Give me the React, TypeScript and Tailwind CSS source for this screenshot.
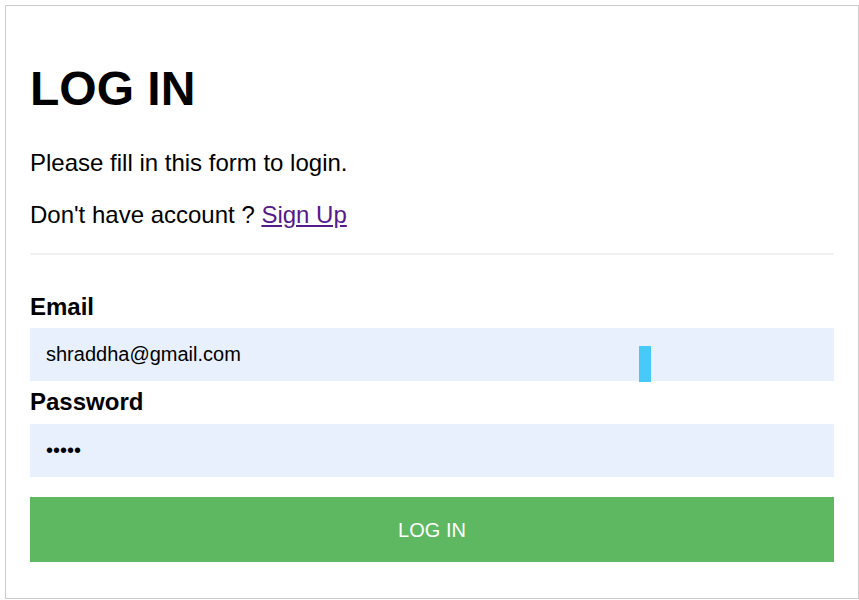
import { useState } from 'react';

export default function App() {
  const [email, setEmail] = useState('shraddha@gmail.com');
  const [password, setPassword] = useState('12345');

  return (
    <div className="min-h-screen bg-white font-['Liberation_Sans',Arial,sans-serif] text-black">
      <div className="ml-[5px] mt-[5px] border border-[#cccccc] px-[24px] pt-[55px] pb-[36px]">
        <h1 className="text-[48px] font-bold leading-[56px]">LOG IN</h1>
        <p className="mt-[32px] text-[24px] leading-[28px]">Please fill in this form to login.</p>
        <p className="mt-[24px] text-[24px] leading-[28px]">
          Don't have account ?{' '}
          <a href="#" className="text-[#551a8b] underline">
            Sign Up
          </a>
        </p>
        <div className="mt-[24px] h-[2px] bg-[#f1f1f1]" />

        <form onSubmit={(e) => e.preventDefault()}>
          <label htmlFor="email" className="mt-[38px] block text-[24px] font-bold leading-[28px]">
            Email
          </label>
          <div className="relative mt-[7px]">
            <input
              id="email"
              type="text"
              value={email}
              onChange={(e) => setEmail(e.target.value)}
              className="block h-[53px] w-full bg-[#e8f0fe] px-[16px] text-[20px] text-black outline-none"
            />
            {/* extension badge sitting over the field */}
            <span className="absolute left-[609px] top-[18px] h-[36px] w-[12px] bg-[#47caf9]" />
          </div>

          <label htmlFor="password" className="mt-[7px] block text-[24px] font-bold leading-[28px]">
            Password
          </label>
          <input
            id="password"
            type="password"
            value={password}
            onChange={(e) => setPassword(e.target.value)}
            className="mt-[8px] block h-[53px] w-full bg-[#e8f0fe] px-[16px] text-[20px] text-black outline-none"
          />

          <button
            type="submit"
            className="mt-[20px] block h-[65px] w-full bg-[#5eb761] text-[20px] text-white"
          >
            LOG IN
          </button>
        </form>
      </div>
    </div>
  );
}
